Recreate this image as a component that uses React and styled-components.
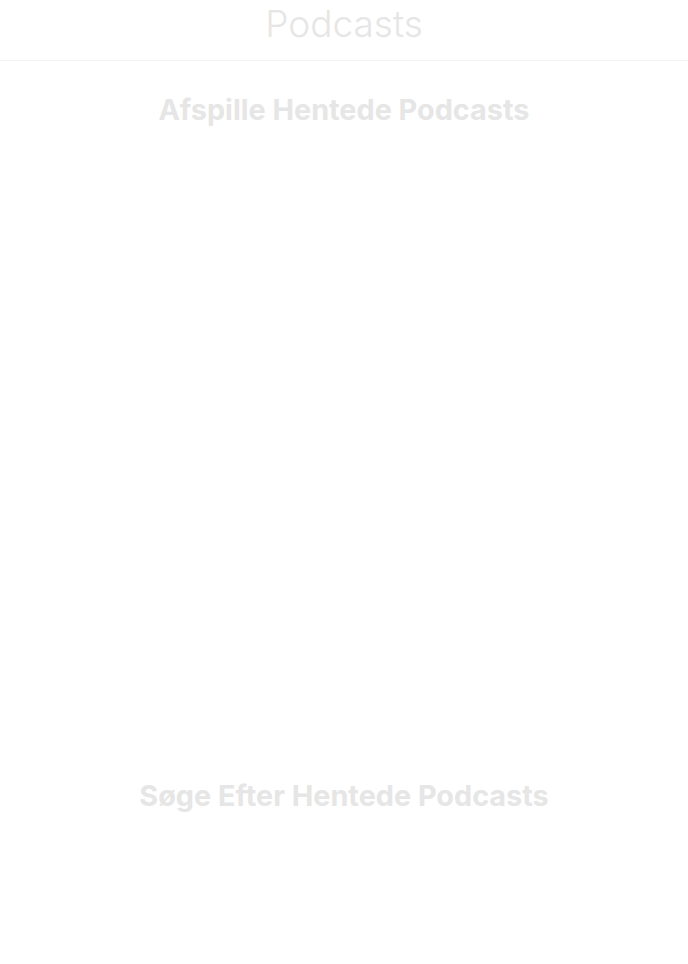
import React from 'react';
import styled, { createGlobalStyle } from 'styled-components';

const GlobalStyle = createGlobalStyle`
  html, body {
    margin: 0;
    padding: 0;
    background: #fff;
    font-family: Inter, "Noto Sans", sans-serif;
  }
`;

const Page = styled.div`
  display: flex;
  flex-direction: column;
  width: 100%;
  min-height: 964px;
`;

const Header = styled.header`
  display: flex;
  justify-content: center;
  align-items: center;
  height: 60px;
  border-bottom: 1px solid #f3f3f3;
`;

const Title = styled.h1`
  margin: 0;
  font-size: 37px;
  font-weight: 300;
  color: #e6e6e6;
  line-height: 48px;
  transform: translateY(-6px);
`;

const Section = styled.section`
  display: flex;
  flex-direction: column;
  align-items: center;
  padding-top: ${(p) => p.$top}px;
  min-height: ${(p) => p.$height}px;
  box-sizing: border-box;
`;

const SectionTitle = styled.h2`
  margin: 0;
  font-size: 28.8px;
  font-weight: 700;
  line-height: 34px;
  color: #e6e6e6;
`;

export default function App() {
  return (
    <Page>
      <GlobalStyle />
      <Header>
        <Title>Podcasts</Title>
      </Header>
      <Section $top={32} $height={718}>
        <SectionTitle>Afspille Hentede Podcasts</SectionTitle>
      </Section>
      <Section $top={0} $height={180}>
        <SectionTitle>Søge Efter Hentede Podcasts</SectionTitle>
      </Section>
    </Page>
  );
}
